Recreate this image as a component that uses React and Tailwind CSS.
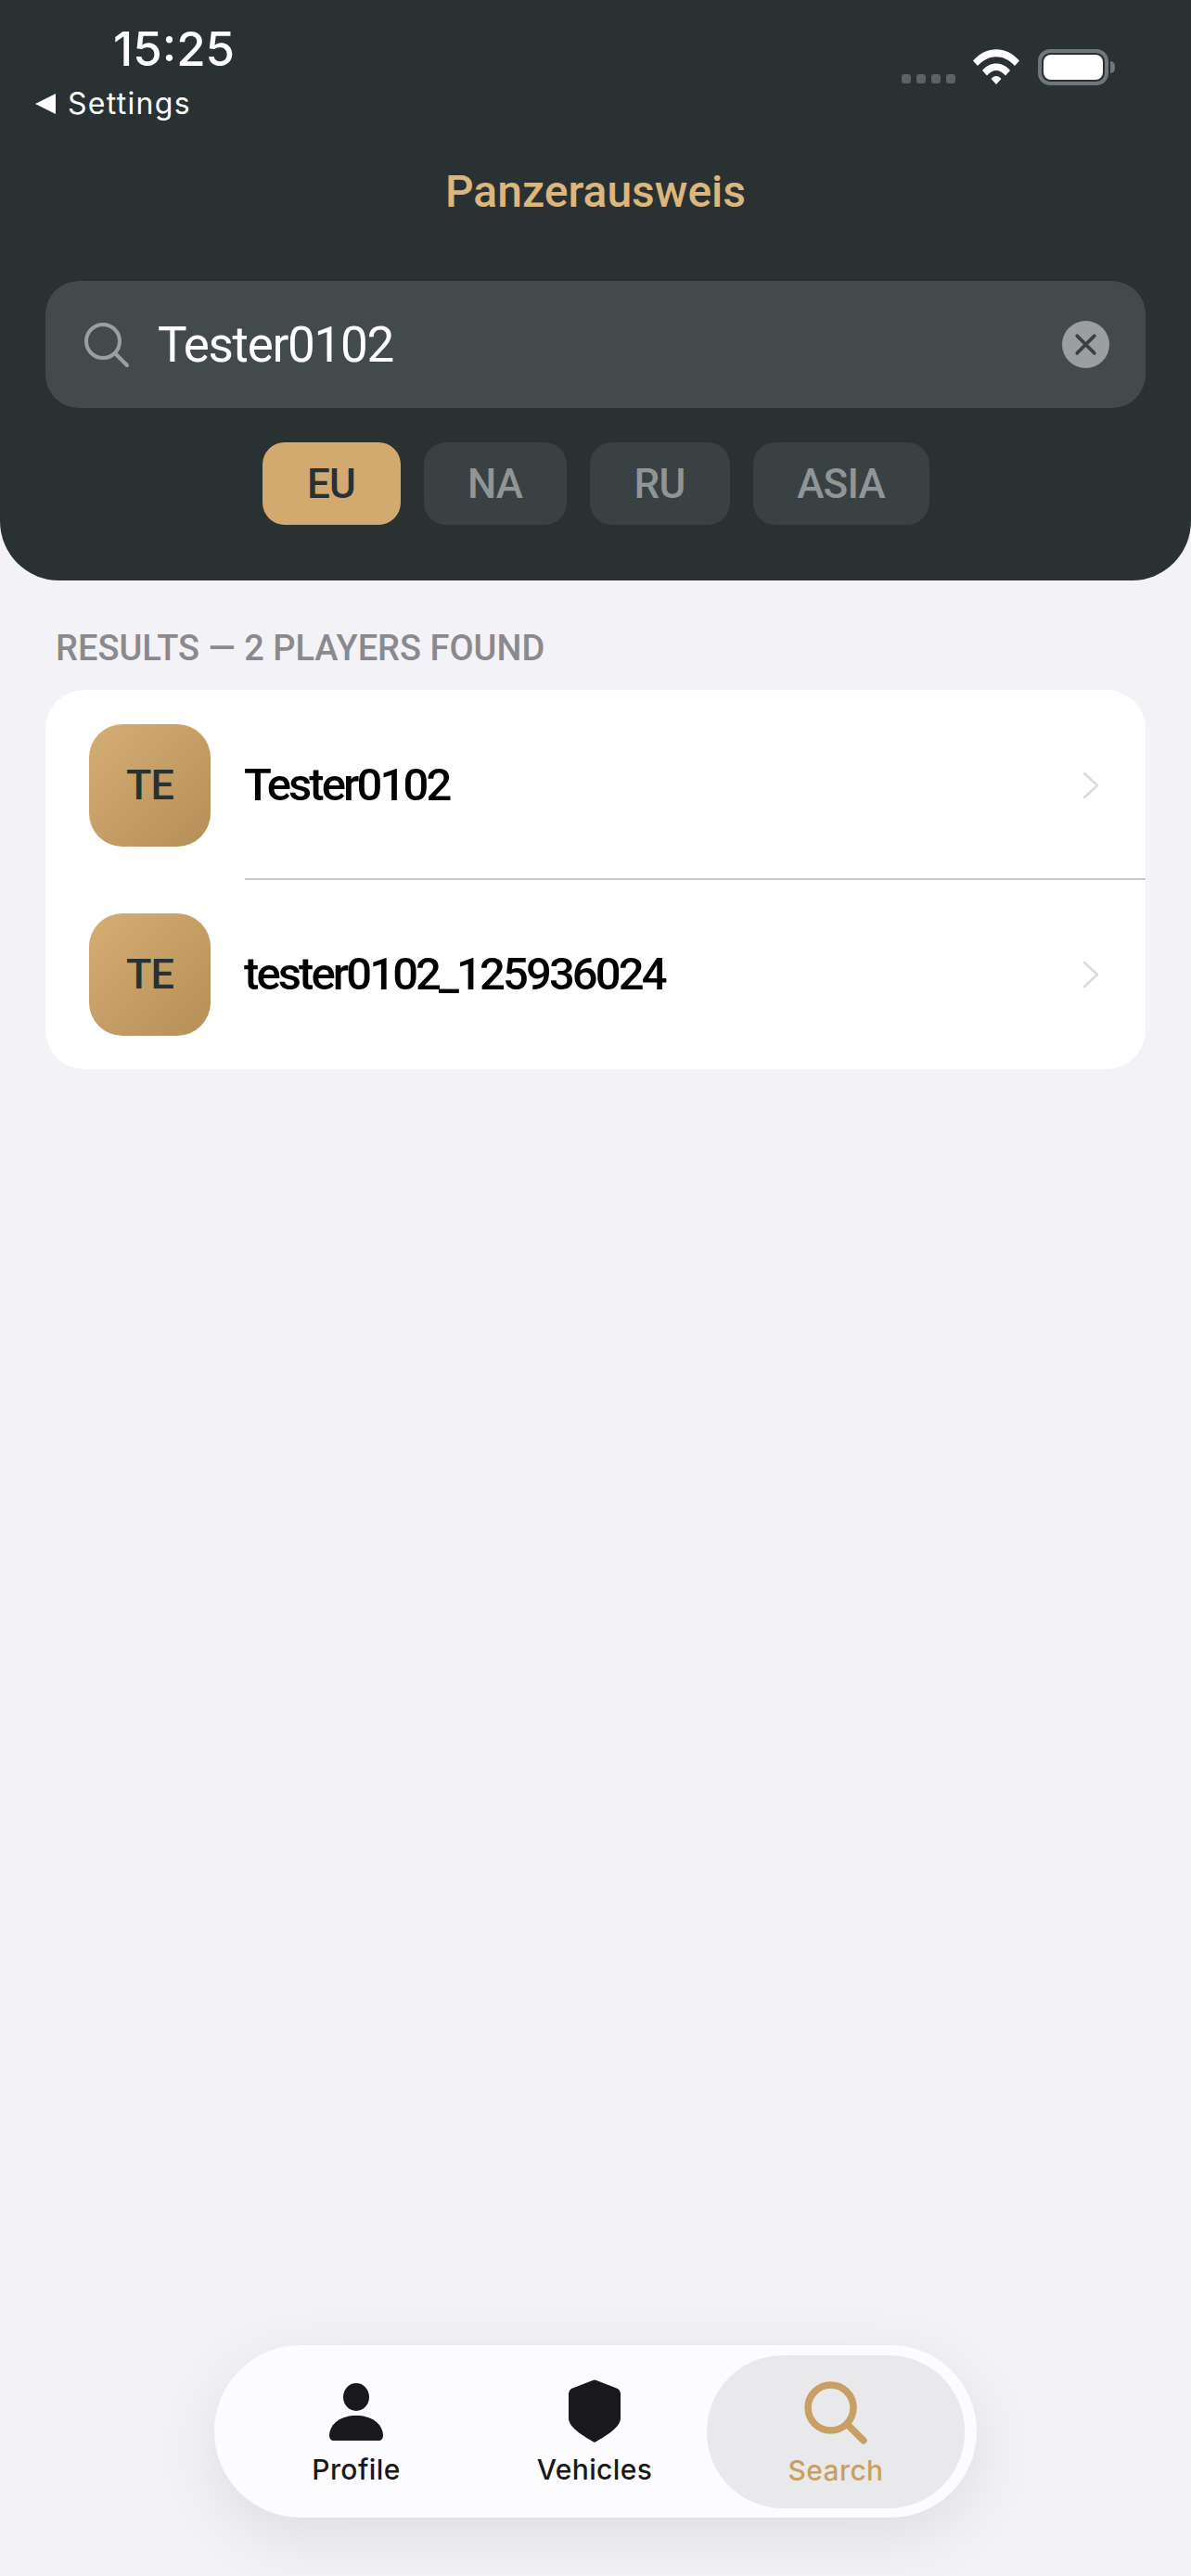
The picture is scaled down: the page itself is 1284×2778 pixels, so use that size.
import React from 'react';

const font = "font-['Roboto',sans-serif]";
const ui = "font-['Inter',sans-serif]";

const regions = [
  { name: 'EU', width: 'w-[149px]', active: true },
  { name: 'NA', width: 'w-[154px]' },
  { name: 'RU', width: 'w-[151px]' },
  { name: 'ASIA', width: 'w-[190px]' },
];

const players = ['Tester0102', 'tester0102_125936024'];

const SearchIcon = ({ className, strokeWidth = 5 }) => (
  <svg viewBox="0 0 50 50" className={className} fill="none" stroke="currentColor" strokeWidth={strokeWidth} strokeLinecap="round">
    <circle cx="21" cy="21" r="18" />
    <path d="M34 34 L47 47" />
  </svg>
);

const StatusIcons = () => (
  <div className="flex items-end">
    <div className="flex gap-[6px] mb-[1px]">
      {[0, 1, 2, 3].map((i) => (
        <div key={i} className="w-[10px] h-[10px] rounded-[3px] bg-[#5c6366]" />
      ))}
    </div>
    <svg viewBox="0 0 50 38" className="w-[50px] h-[38px] ml-[19px] text-white" fill="currentColor">
      <path d="M0 12.5 C14 -4 36 -4 50 12.5 L45 18 C33 5 17 5 5 18 Z" />
      <path d="M10 23 C18 13 32 13 40 23 L35 28.5 C29 21 21 21 15 28.5 Z" />
      <path d="M19.5 32 C23 28 27 28 30.5 32 L25 38 Z" />
    </svg>
    <div className="flex items-center ml-[20px] mb-[-1px]">
      <div className="w-[76px] h-[39px] rounded-[13px] border-[4px] border-[#70777a] p-[2px]">
        <div className="w-full h-full rounded-[8px] bg-white" />
      </div>
      <div className="w-[5px] h-[13px] ml-[2px] rounded-r-[5px] bg-[#70777a]" />
    </div>
  </div>
);

const Header = () => (
  <header className="h-[626px] shrink-0 bg-[#2a3133] rounded-b-[64px] flex flex-col">
    <div className={`flex justify-between items-start pl-[38px] pr-[82px] pt-[23px] ${ui}`}>
      <div>
        <div className="ml-[84px] text-[51px] leading-[60px] font-medium text-white">15:25</div>
        <div className="flex items-center gap-[13px] h-[40px] mt-[9px]">
          <div className="w-0 h-0 border-y-[11px] border-y-transparent border-r-[22px] border-r-white" />
          <span className="text-[32px] leading-[40px] tracking-[1.3px] text-white">Settings</span>
        </div>
      </div>
      <div className="pt-[30px]">
        <StatusIcons />
      </div>
    </div>

    <h1 className={`mt-[45px] text-center text-[48px] leading-[60px] font-medium text-[#dcb67c] ${font}`}>Panzerausweis</h1>

    <div className="mx-[49px] mt-[66px] h-[137px] rounded-[36px] bg-[#434a4c] flex items-center pl-[41px] pr-[39px]">
      <SearchIcon className="w-[50px] h-[50px] text-[#9aa0a2]" strokeWidth={4} />
      <span className={`ml-[30px] flex-1 text-[53px] leading-[64px] tracking-[-1.3px] text-white ${font}`}>Tester0102</span>
      <div className="w-[51px] h-[51px] rounded-full bg-[#9b9fa1] flex items-center justify-center">
        <svg viewBox="0 0 24 24" className="w-[25px] h-[25px] text-[#3a4143]" fill="none" stroke="currentColor" strokeWidth="3.4" strokeLinecap="round">
          <path d="M3 3 L21 21 M21 3 L3 21" />
        </svg>
      </div>
    </div>

    <div className="mt-[37px] flex justify-center gap-[25px]">
      {regions.map((r) => (
        <div
          key={r.name}
          className={`${r.width} h-[89px] rounded-[24px] flex items-center justify-center text-[44px] font-medium tracking-[-0.8px] ${font} ${r.active ? 'bg-[#d2aa70] text-[#2a3133]' : 'bg-[#3a4143] text-[#909597]'}`}
        >
          {r.name}
        </div>
      ))}
    </div>
  </header>
);

const PlayerRow = ({ name, last }) => (
  <div className={`relative flex items-center pl-[47px] pr-[50px] ${last ? 'h-[204px]' : 'h-[205px]'}`}>
    <div className={`w-[131px] h-[132px] shrink-0 rounded-[36px] bg-gradient-to-br from-[#d5ae74] to-[#b58f57] flex items-center justify-center text-[45px] font-medium tracking-[-0.8px] text-[#2a3133] ${font}`}>
      TE
    </div>
    <span className={`ml-[36px] flex-1 text-[49px] leading-[60px] font-medium text-black tracking-[-2.9px] ${font}`}>{name}</span>
    <svg viewBox="0 0 18 30" className="w-[18px] h-[30px] text-[#dcdcdf]" fill="none" stroke="currentColor" strokeWidth="2.6" strokeLinecap="round" strokeLinejoin="round">
      <path d="M2 2 L16 15 L2 28" />
    </svg>
    {!last && <div className="absolute left-[215px] right-0 bottom-0 h-[2px] bg-[#c9c9cb]" />}
  </div>
);

const TabBar = () => (
  <nav className={`mt-auto mb-[63px] self-center w-[822px] h-[186px] rounded-[93px] bg-[#fcfcfe] shadow-[0_20px_70px_rgba(0,0,0,0.09)] flex items-center pl-[10px] ${ui}`}>
    <div className="w-[286px] flex flex-col items-center">
      <svg viewBox="0 0 58 62" className="w-[58px] h-[62px] mt-[6px] text-[#19191b]" fill="currentColor">
        <ellipse cx="29" cy="15" rx="14" ry="15" />
        <path d="M0 56 C1 43 13 35 29 35 C45 35 57 43 58 56 C58 60 56 62 53 62 L5 62 C2 62 0 60 0 56 Z" />
      </svg>
      <span className="mt-[13px] text-[30px] leading-[36px] font-medium tracking-[0.4px] text-[#19191b]">Profile</span>
    </div>
    <div className="w-[228px] flex flex-col items-center">
      <svg viewBox="0 0 56 68" className="w-[56px] h-[68px] mt-[2px] text-[#19191b]" fill="currentColor">
        <path d="M26 1 Q28 0 30 1 L53 10 Q56 12 56 15 L56 42 C56 51 42 60 29 67.5 Q28 68 27 67.5 C14 60 0 51 0 42 L0 15 Q0 12 3 10 Z" />
      </svg>
      <span className="mt-[11px] text-[30px] leading-[36px] font-medium tracking-[0.4px] text-[#19191b]">Vehicles</span>
    </div>
    <div className="ml-[7px] w-[278px] h-[165px] rounded-[82px] bg-[#e9e9eb] flex flex-col items-center justify-center">
      <SearchIcon className="w-[68px] h-[68px] mt-[5px] text-[#c89f65]" strokeWidth={5.5} />
      <span className="mt-[10px] text-[30px] leading-[36px] font-medium tracking-[0.4px] text-[#c89f65]">Search</span>
    </div>
  </nav>
);

export default function App() {
  return (
    <div className="w-[1284px] h-[2778px] bg-[#f2f2f7] flex flex-col overflow-hidden">
      <Header />
      <div className={`mt-[51px] ml-[60px] text-[38px] leading-[44px] font-medium text-[#8a8a8e] ${font}`}>
        RESULTS — 2 PLAYERS FOUND
      </div>
      <div className="mx-[49px] mt-[23px] rounded-[42px] bg-white overflow-hidden">
        {players.map((name, i) => (
          <PlayerRow key={name} name={name} last={i === players.length - 1} />
        ))}
      </div>
      <TabBar />
    </div>
  );
}
